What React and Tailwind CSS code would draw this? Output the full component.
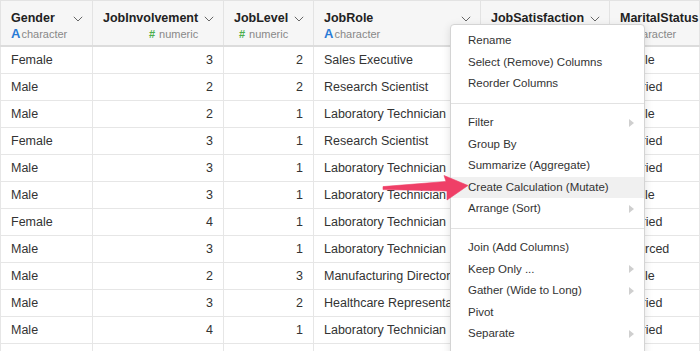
import React from 'react';

const columns = [
    { name: 'Gender', type: 'character', width: 'w-[93px]' },
    { name: 'JobInvolvement', type: 'numeric', width: 'w-[131px]' },
    { name: 'JobLevel', type: 'numeric', width: 'w-[90px]' },
    { name: 'JobRole', type: 'character', width: 'w-[167px]' },
    { name: 'JobSatisfaction', type: 'numeric', width: 'w-[129px]' },
    { name: 'MaritalStatus', type: 'character', width: 'w-[90px]' },
];

const rows = [
    ['Female', 3, 2, 'Sales Executive', 4, 'Single'],
    ['Male', 2, 2, 'Research Scientist', 2, 'Married'],
    ['Male', 2, 1, 'Laboratory Technician', 3, 'Single'],
    ['Female', 3, 1, 'Research Scientist', 3, 'Married'],
    ['Male', 3, 1, 'Laboratory Technician', 2, 'Married'],
    ['Male', 3, 1, 'Laboratory Technician', 4, 'Single'],
    ['Female', 4, 1, 'Laboratory Technician', 1, 'Married'],
    ['Male', 3, 1, 'Laboratory Technician', 3, 'Divorced'],
    ['Male', 2, 3, 'Manufacturing Director', 3, 'Single'],
    ['Male', 3, 2, 'Healthcare Representative', 3, 'Married'],
    ['Male', 4, 1, 'Laboratory Technician', 1, 'Married'],
    ['Female', 3, 1, 'Research Director', 2, 'Single'],
];

const menuGroups = [
    [
        { label: 'Rename' },
        { label: 'Select (Remove) Columns' },
        { label: 'Reorder Columns' },
    ],
    [
        { label: 'Filter', sub: true },
        { label: 'Group By' },
        { label: 'Summarize (Aggregate)' },
        { label: 'Create Calculation (Mutate)', active: true },
        { label: 'Arrange (Sort)', sub: true },
    ],
    [
        { label: 'Join (Add Columns)' },
        { label: 'Keep Only ...', sub: true },
        { label: 'Gather (Wide to Long)', sub: true },
        { label: 'Pivot' },
        { label: 'Separate', sub: true },
    ],
];

function Chevron() {
    return (
        <svg width="10" height="6" viewBox="0 0 10 6" className="mt-[6px] shrink-0">
            <path d="M0.8 0.8 L5 5 L9.2 0.8" fill="none" stroke="#666" strokeWidth="1" />
        </svg>
    );
}

function HeaderCell({ col, first }) {
    const numeric = col.type === 'numeric';
    return (
        <div className={`${col.width} h-full shrink-0 border-r border-[#e3e3e3] ${first ? 'border-l' : ''} flex justify-between items-start pl-[10px] pr-[9px] pt-[9px] overflow-hidden`}>
            <div className={`flex flex-col ${numeric ? 'items-end' : 'items-start'}`}>
                <span className="text-[12.5px] font-bold text-[#222] leading-[16px] whitespace-nowrap">{col.name}</span>
                <span className="text-[11px] text-[#888] leading-[14px] mt-[1px] whitespace-nowrap">
                    {numeric ? (
                        <span className="font-bold text-[#4cae4c] mr-[4px]">#</span>
                    ) : (
                        <span className="font-bold text-[#2a7bd6] text-[13px] mr-[1px]">A</span>
                    )}
                    {col.type}
                </span>
            </div>
            <Chevron />
        </div>
    );
}

function SubArrow() {
    return (
        <svg width="5" height="8" viewBox="0 0 5 8">
            <path d="M0 0 L5 4 L0 8 Z" fill="#cfcfcf" />
        </svg>
    );
}

export default function App() {
    return (
        <div className="relative w-[700px] h-[351px] overflow-hidden bg-white font-['Liberation_Sans',Arial,sans-serif]">
            <div className="flex flex-col border-t border-[#e3e3e3]">
                <div className="flex h-[46px] bg-[#f6f6f6] border-b-2 border-[#dcdcdc]">
                    {columns.map((col, i) => (
                        <HeaderCell key={col.name} col={col} first={i === 0} />
                    ))}
                </div>
                {rows.map((row, r) => (
                    <div key={r} className="flex h-[27px] border-b border-[#e6e6e6]">
                        {row.map((val, c) => {
                            const numeric = columns[c].type === 'numeric';
                            return (
                                <div
                                    key={c}
                                    className={`${columns[c].width} shrink-0 border-r border-[#e6e6e6] ${c === 0 ? 'border-l' : ''} flex items-center ${numeric ? 'justify-end' : 'justify-start'} px-[10px] overflow-hidden whitespace-nowrap text-[12.5px] text-[#333]`}
                                >
                                    {val}
                                </div>
                            );
                        })}
                    </div>
                ))}
            </div>

            {/* column menu */}
            <div className="absolute left-[450px] top-[24px] w-[195px] h-[340px] bg-white border border-[#d4d4d4] rounded-[4px] shadow-[0_2px_8px_rgba(0,0,0,0.12)] pt-[5px]">
                {menuGroups.map((group, g) => (
                    <div key={g}>
                        {g > 0 && <div className="h-px bg-[#e2e2e2] mt-[8.5px] mb-[8px]" />}
                        {group.map((item) => (
                            <div
                                key={item.label}
                                className={`h-[21.5px] flex items-center justify-between pl-[17px] pr-[10px] text-[11.5px] text-[#333] ${item.active ? 'bg-[#f0f0f0]' : ''}`}
                            >
                                <span>{item.label}</span>
                                {item.sub && <SubArrow />}
                            </div>
                        ))}
                    </div>
                ))}
            </div>

            {/* pointer arrow */}
            <svg className="absolute left-0 top-0 pointer-events-none" width="700" height="351" viewBox="0 0 700 351">
                <polygon
                    points="383,186.6 446,181.5 444,175.5 468,185.5 447,200 447,191 383,189.6"
                    fill="#ef3f67"
                    stroke="#ef3f67"
                    strokeWidth="0.6"
                    strokeLinejoin="round"
                />
            </svg>
        </div>
    );
}
